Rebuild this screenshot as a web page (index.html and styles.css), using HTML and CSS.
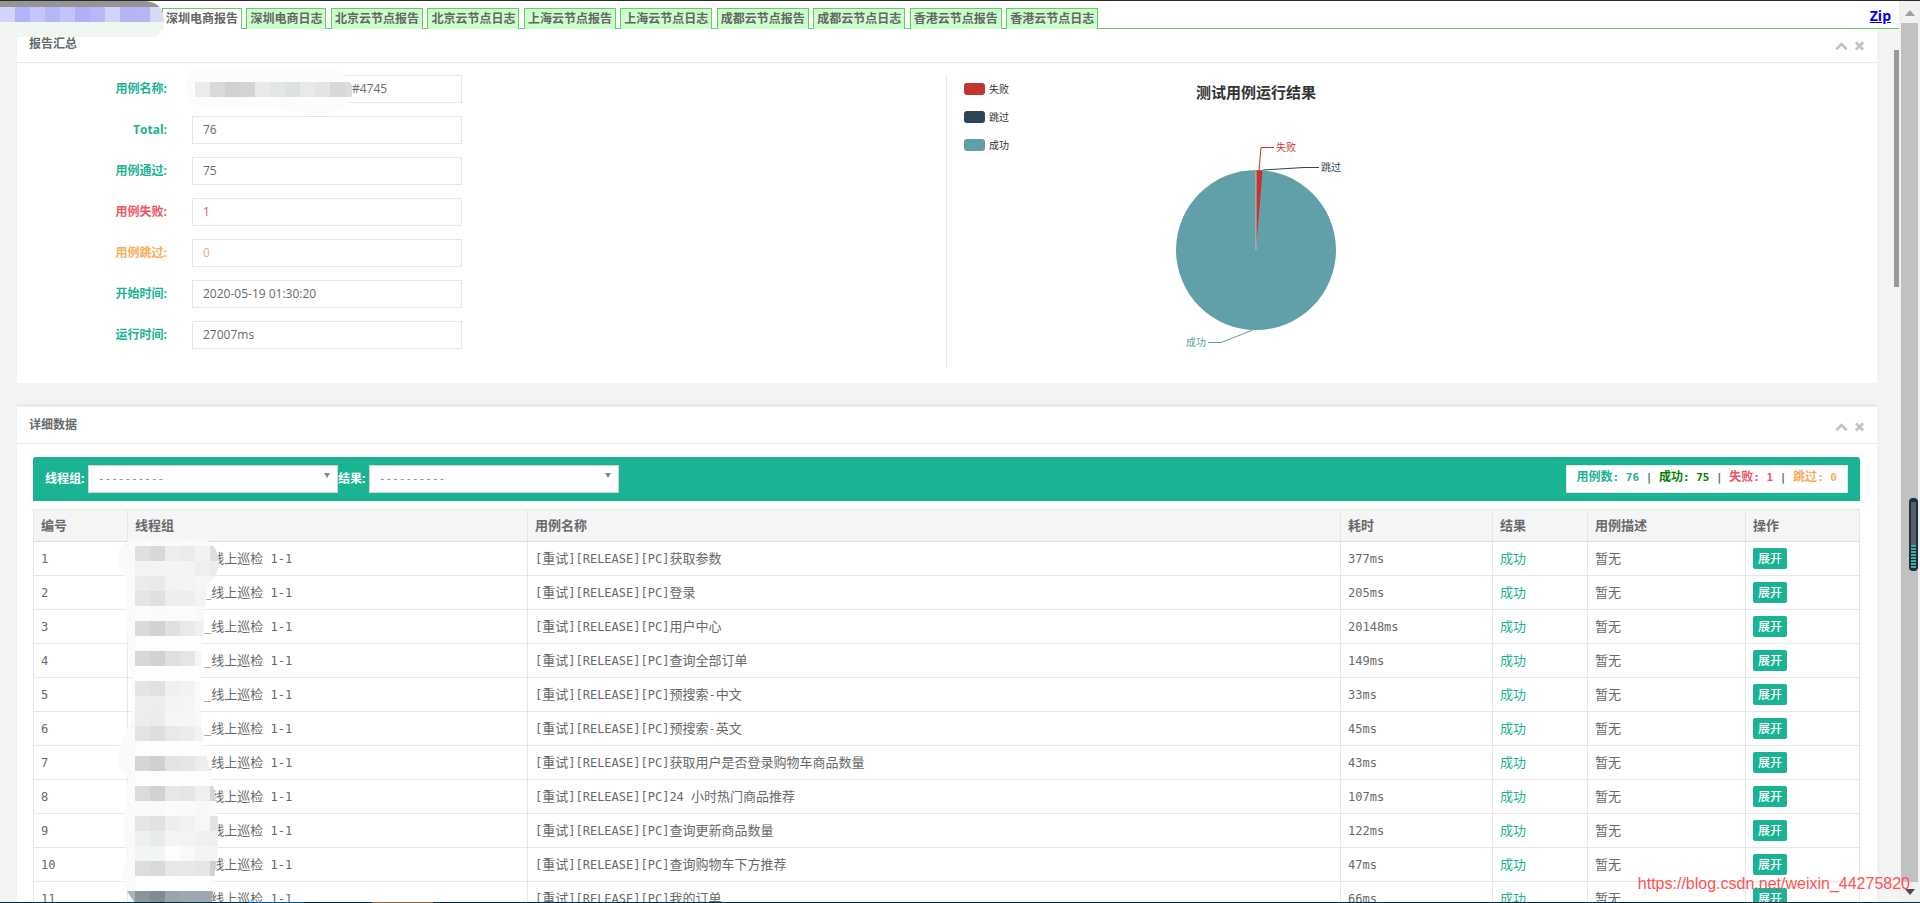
FILE: index.html
```html
<!DOCTYPE html>
<html lang="zh-CN">
<head>
<meta charset="utf-8">
<title>测试报告</title>
<link rel="stylesheet" href="styles.css">
</head>
<body>
<div class="window">
  <div class="frame">
    <header class="topbar">
      <nav class="tabs">
        <a class="tab active" href="#">深圳电商报告</a>
        <a class="tab" href="#">深圳电商日志</a>
        <a class="tab" href="#">北京云节点报告</a>
        <a class="tab" href="#">北京云节点日志</a>
        <a class="tab" href="#">上海云节点报告</a>
        <a class="tab" href="#">上海云节点日志</a>
        <a class="tab" href="#">成都云节点报告</a>
        <a class="tab" href="#">成都云节点日志</a>
        <a class="tab" href="#">香港云节点报告</a>
        <a class="tab" href="#">香港云节点日志</a>
      </nav>
      <a class="zip" href="#">Zip</a>
      <svg class="redact redact-top" width="166" height="42" aria-hidden="true">
        <defs><clipPath id="clip-top"><path d="M0 0H146Q164 2 164 20Q164 30 156 36H10Q0 34 0 28Z"/></clipPath></defs>
        <g clip-path="url(#clip-top)" data-mosaic="top"></g>
      </svg>
    </header>

    <main class="content">
      <section class="panel">
        <div class="panel-head first">
          <h5>报告汇总</h5>
          <div class="tools">
            <button type="button" aria-label="收起"><svg viewBox="0 0 1792 1792"><path d="M1683 1331l-166 165q-19 19-45 19t-45-19l-531-531-531 531q-19 19-45 19t-45-19l-166-165q-19-19-19-45.500t19-45.500l742-741q19-19 45-19t45 19l742 741q19 19 19 45.500t-19 45.500z"/></svg></button>
            <button type="button" aria-label="关闭"><svg viewBox="0 0 1792 1792"><path d="M1490 1322q0 40-28 68l-136 136q-28 28-68 28t-68-28l-294-294-294 294q-28 28-68 28t-68-28l-136-136q-28-28-28-68t28-68l294-294-294-294q-28-28-28-68t28-68l136-136q28-28 68-28t68 28l294 294 294-294q28-28 68-28t68 28l136 136q28 28 28 68t-28 68l-294 294 294 294q28 28 28 68z"/></svg></button>
          </div>
        </div>
        <div class="summary">
          <form class="fields">
            <label for="f-name">用例名称:</label>
            <div class="name-box">
              <input id="f-name" class="masked" value="#4745" readonly>
              <svg class="redact redact-name" width="170" height="48" aria-hidden="true">
                <defs><clipPath id="clip-name"><path d="M2 22Q0 2 14 1H110Q154 0 160 8L168 18V30L162 40Q150 46 140 46Q110 46 90 40H20Q4 40 2 22Z"/></clipPath></defs>
                <g clip-path="url(#clip-name)" data-mosaic="name"></g>
              </svg>
            </div>
            <label for="f-total">Total:</label><input id="f-total" value="76" readonly>
            <label for="f-pass">用例通过:</label><input id="f-pass" value="75" readonly>
            <label class="danger" for="f-fail">用例失败:</label><input id="f-fail" class="danger" value="1" readonly>
            <label class="warn" for="f-skip">用例跳过:</label><input id="f-skip" class="warn" value="0" readonly>
            <label for="f-start">开始时间:</label><input id="f-start" value="2020-05-19 01:30:20" readonly>
            <label for="f-run">运行时间:</label><input id="f-run" value="27007ms" readonly>
          </form>
          <div class="chart">
            <ul class="legend">
              <li><i class="c-fail"></i>失败</li>
              <li><i class="c-skip"></i>跳过</li>
              <li><i class="c-pass"></i>成功</li>
            </ul>
            <div class="pie">
              <h3>测试用例运行结果</h3>
              <svg width="240" height="240" viewBox="0 0 240 240" role="img" aria-label="测试用例运行结果">
                <circle cx="120" cy="136" r="80" fill="#61a0a8"/>
                <path d="M120 136L120 56A80 80 0 0 1 126.600 56.300Z" fill="#c23531"/>
                <path d="M120 136V56" stroke="#b9c6c6" stroke-width="1"/>
                <g fill="none">
                  <path d="M123 56L125 33.500H138" stroke="#c23531"/>
                  <path d="M127 56L168 53.500H183" stroke="#2f4554"/>
                  <path d="M117 216L85 228.500H72" stroke="#61a0a8"/>
                </g>
                <g class="pie-labels">
                  <text x="140" y="37" fill="#c23531">失败</text>
                  <text x="185" y="57" fill="#2f4554">跳过</text>
                  <text x="50" y="232" fill="#61a0a8">成功</text>
                </g>
              </svg>
            </div>
          </div>
        </div>
      </section>

      <section class="panel second">
        <div class="panel-head">
          <h5>详细数据</h5>
          <div class="tools">
            <button type="button" aria-label="收起"><svg viewBox="0 0 1792 1792"><path d="M1683 1331l-166 165q-19 19-45 19t-45-19l-531-531-531 531q-19 19-45 19t-45-19l-166-165q-19-19-19-45.500t19-45.500l742-741q19-19 45-19t45 19l742 741q19 19 19 45.500t-19 45.500z"/></svg></button>
            <button type="button" aria-label="关闭"><svg viewBox="0 0 1792 1792"><path d="M1490 1322q0 40-28 68l-136 136q-28 28-68 28t-68-28l-294-294-294 294q-28 28-68 28t-68-28l-136-136q-28-28-28-68t28-68l294-294-294-294q-28-28-28-68t28-68l136-136q28-28 68-28t68 28l294 294 294-294q28-28 68-28t68 28l136 136q28 28 28 68t-28 68l-294 294 294 294q28 28 28 68z"/></svg></button>
          </div>
        </div>
        <div class="details">
          <div class="toolbar">
            <label class="lab-group" for="s-group">线程组:</label>
            <span class="pick"><select id="s-group"><option>----------</option></select></span>
            <label class="lab-result" for="s-result">结果:</label>
            <span class="pick"><select id="s-result"><option>----------</option></select></span>
            <div class="stats"><b class="ok">用例数<code>: 76</code></b><code> | </code><b class="green">成功<code>: 75</code></b><code> | </code><b class="danger">失败<code>: 1</code></b><code> | </code><b class="warn">跳过<code>: 0</code></b></div>
          </div>
          <div class="table-box">
            <table>
              <colgroup><col class="w-no"><col class="w-group"><col><col class="w-time"><col class="w-result"><col class="w-desc"><col class="w-op"></colgroup>
              <thead>
                <tr><th>编号</th><th>线程组</th><th>用例名称</th><th>耗时</th><th>结果</th><th>用例描述</th><th>操作</th></tr>
              </thead>
              <tbody>
                <tr><td><code>1</code></td><td class="grp"><code>_</code>线上巡检<code> 1-1</code></td><td><code>[</code>重试<code>][RELEASE][PC]</code>获取参数</td><td><code>377ms</code></td><td class="ok">成功</td><td>暂无</td><td><button type="button" class="open">展开</button></td></tr>
                <tr><td><code>2</code></td><td class="grp"><code>_</code>线上巡检<code> 1-1</code></td><td><code>[</code>重试<code>][RELEASE][PC]</code>登录</td><td><code>205ms</code></td><td class="ok">成功</td><td>暂无</td><td><button type="button" class="open">展开</button></td></tr>
                <tr><td><code>3</code></td><td class="grp"><code>_</code>线上巡检<code> 1-1</code></td><td><code>[</code>重试<code>][RELEASE][PC]</code>用户中心</td><td><code>20148ms</code></td><td class="ok">成功</td><td>暂无</td><td><button type="button" class="open">展开</button></td></tr>
                <tr><td><code>4</code></td><td class="grp"><code>_</code>线上巡检<code> 1-1</code></td><td><code>[</code>重试<code>][RELEASE][PC]</code>查询全部订单</td><td><code>149ms</code></td><td class="ok">成功</td><td>暂无</td><td><button type="button" class="open">展开</button></td></tr>
                <tr><td><code>5</code></td><td class="grp"><code>_</code>线上巡检<code> 1-1</code></td><td><code>[</code>重试<code>][RELEASE][PC]</code>预搜索<code>-</code>中文</td><td><code>33ms</code></td><td class="ok">成功</td><td>暂无</td><td><button type="button" class="open">展开</button></td></tr>
                <tr><td><code>6</code></td><td class="grp"><code>_</code>线上巡检<code> 1-1</code></td><td><code>[</code>重试<code>][RELEASE][PC]</code>预搜索<code>-</code>英文</td><td><code>45ms</code></td><td class="ok">成功</td><td>暂无</td><td><button type="button" class="open">展开</button></td></tr>
                <tr><td><code>7</code></td><td class="grp"><code>_</code>线上巡检<code> 1-1</code></td><td><code>[</code>重试<code>][RELEASE][PC]</code>获取用户是否登录购物车商品数量</td><td><code>43ms</code></td><td class="ok">成功</td><td>暂无</td><td><button type="button" class="open">展开</button></td></tr>
                <tr><td><code>8</code></td><td class="grp"><code>_</code>线上巡检<code> 1-1</code></td><td><code>[</code>重试<code>][RELEASE][PC]24 </code>小时热门商品推荐</td><td><code>107ms</code></td><td class="ok">成功</td><td>暂无</td><td><button type="button" class="open">展开</button></td></tr>
                <tr><td><code>9</code></td><td class="grp"><code>_</code>线上巡检<code> 1-1</code></td><td><code>[</code>重试<code>][RELEASE][PC]</code>查询更新商品数量</td><td><code>122ms</code></td><td class="ok">成功</td><td>暂无</td><td><button type="button" class="open">展开</button></td></tr>
                <tr><td><code>10</code></td><td class="grp"><code>_</code>线上巡检<code> 1-1</code></td><td><code>[</code>重试<code>][RELEASE][PC]</code>查询购物车下方推荐</td><td><code>47ms</code></td><td class="ok">成功</td><td>暂无</td><td><button type="button" class="open">展开</button></td></tr>
                <tr><td><code>11</code></td><td class="grp"><code>_</code>线上巡检<code> 1-1</code></td><td><code>[</code>重试<code>][RELEASE][PC]</code>我的订单</td><td><code>66ms</code></td><td class="ok">成功</td><td>暂无</td><td><button type="button" class="open">展开</button></td></tr>
              </tbody>
            </table>
            <svg class="redact redact-table" width="104" height="363" aria-hidden="true">
              <defs><clipPath id="clip-table"><path d="M10 2Q50 -1 90 2Q100 8 101 24Q100 38 90 45L87 70L84 105L82 150L83 185L88 215L96 250L100 280V310L96 340L94 363H16L9 352Q2 340 6 325L10 314Q4 300 6 285L7 262L10 240L0 226V216Q8 190 14 180V140L10 110L8 70L9 40Q0 32 0 20Q1 6 10 2Z"/></clipPath></defs>
              <g clip-path="url(#clip-table)" data-mosaic="table"></g>
            </svg>
          </div>
        </div>
      </section>
      <div class="inner-scroll"><div class="inner-thumb"></div></div>
    </main>
  </div>

  <div class="outer-scroll">
    <svg width="10" height="6" viewBox="0 0 10 6"><path d="M0 6L5 0L10 6Z" fill="#a0a0a0"/></svg>
    <div class="outer-thumb"></div>
    <svg width="10" height="6" viewBox="0 0 10 6"><path d="M0 0L5 6L10 0Z" fill="#4a4a4a"/></svg>
  </div>
  <div class="meter"><div class="meter-track"></div></div>
  <div class="watermark">https://blog.csdn.net/weixin_44275820</div>
  <div class="desk-edge"></div>
</div>
<script src="mosaic.js"></script>
</body>
</html>
```
FILE: styles.css
```css
* { box-sizing: border-box; }
html, body { height: 100%; }
body {
  margin: 0;
  overflow: hidden;
  background: #f3f3f4;
  color: #676a6c;
  font: 12px/18px "Open Sans", "Noto Sans CJK SC", sans-serif;
}
code { font: 12px/18px "DejaVu Sans Mono", monospace; white-space: pre; }
input, select, button { font: inherit; color: inherit; }
h3, h5, ul { margin: 0; padding: 0; }
.danger { color: #ed5565; }
.warn { color: #f8ac59; }
.ok { color: #1ab394; }
.green { color: #008000; }

.window {
  position: relative;
  display: grid;
  grid-template-columns: 1fr 21px;
  height: 100vh;
  overflow: hidden;
  border-top: 1px solid #2b2b2b;
}
.frame { display: flex; flex-direction: column; min-width: 0; min-height: 0; }
.topbar {
  position: relative;
  z-index: 2;
  display: flex;
  justify-content: space-between;
  flex: none;
  height: 28px;
  padding: 7px 8px 0 162px;
  background: #fff;
  border-bottom: 1px solid #66cc66;
}
.tabs { font: 16px/20px "Liberation Sans", Arial, sans-serif; white-space: nowrap; height: 21px; }
.tab {
  display: inline-block;
  vertical-align: top;
  height: 21px;
  padding: 0 3px;
  border: 1px solid #66cc66;
  border-bottom: 0;
  background: #ccffcc;
  color: #666;
  font: bold 12px/20px "Open Sans", "Noto Sans CJK SC", sans-serif;
  text-decoration: none;
}
.tab.active { background: #fff; }
.zip { color: #0000ee; font-weight: bold; font-size: 14px; line-height: 16px; }

.redact { position: absolute; pointer-events: none; }
.redact-top { left: 0; top: 0; }

.content { position: relative; flex: 1; min-height: 0; overflow: hidden; padding: 0 22px 0 17px; }
.panel { background: #fff; }
.panel.second { margin-top: 21px; border-top: 3px solid #e7eaec; }
.panel-head {
  display: flex;
  align-items: center;
  justify-content: space-between;
  padding: 9px 11px 9px 12px;
  border-bottom: 1px solid #e7eaec;
}
.panel-head.first { padding-top: 6px; }
.panel-head h5 { font-size: 12px; line-height: 18px; font-weight: 600; }
.tools { display: flex; gap: 5px; padding-top: 3px; }
.tools button { display: block; width: 13px; height: 13px; padding: 0; border: 0; background: none; }
.tools svg { display: block; width: 13px; height: 13px; fill: #c4c4c4; }

.summary { display: grid; grid-template-columns: 1fr 1fr; padding: 12px 0 15px; }
.fields {
  display: grid;
  grid-template-columns: 150px 270px;
  gap: 13px 25px;
  align-content: start;
  align-items: center;
}
.fields label { color: #1ab394; font-weight: bold; text-align: right; }
.fields label.danger { color: #ed5565; }
.fields label.warn { color: #f8ac59; }
.fields input {
  display: block;
  width: 100%;
  height: 28px;
  padding: 0 10px 1px;
  border: 1px solid #e5e6e7;
  background: #fff;
  outline: 0;
}
.fields input.masked { padding-left: 159px; }
.name-box { position: relative; }
.redact-name { left: -8px; top: -8px; }

.chart { display: flex; min-height: 293px; margin-left: -1px; border-left: 1px solid #e7eaec; }
.legend {
  width: 189px;
  padding: 5px 0 0 17px;
  list-style: none;
  color: #333;
  font-size: 10px;
}
.legend li { display: flex; align-items: center; gap: 4px; height: 18px; margin-bottom: 10px; }
.legend i { width: 21px; height: 12px; border-radius: 3px; }
.c-fail { background: #c23531; }
.c-skip { background: #2f4554; }
.c-pass { background: #61a0a8; }
.pie { width: 240px; }
.pie h3 { padding-top: 6px; color: #333; font-size: 15px; line-height: 22px; text-align: center; }
.pie svg { display: block; margin-top: 11px; }
.pie-labels { font-size: 10px; }

.details { padding: 13px 17px 0 16px; }
.toolbar {
  display: flex;
  align-items: center;
  height: 44px;
  padding: 0 12px;
  border-radius: 3px 3px 0 0;
  background: #1ab394;
}
.toolbar label { color: #fff; font-weight: bold; }
.lab-group { width: 43px; }
.lab-result { width: 31px; }
.pick { position: relative; width: 250px; }
.pick::after {
  content: "";
  position: absolute;
  right: 8px;
  top: 8px;
  border: 3px solid transparent;
  border-top: 5px solid #888;
  border-bottom: 0;
}
.pick select {
  display: block;
  width: 100%;
  height: 28px;
  padding: 0 6px 2px;
  border: 1px solid #d5d5d5;
  border-radius: 0;
  background: #fff;
  color: #888;
  appearance: none;
  font: 11px "DejaVu Sans Mono", monospace;
  padding-left: 9px;
}
.stats {
  height: 28px;
  margin-left: auto;
  padding: 2px 10px;
  border: 1px solid #e5e6e7;
  background: #fff;
  white-space: nowrap;
}
.stats code { font-size: 11px; font-weight: bold; }

.table-box { position: relative; margin-top: 8px; }
table { width: 100%; table-layout: fixed; border-collapse: collapse; font-size: 13px; }
.w-no { width: 94px; }
.w-group { width: 400px; }
.w-time { width: 152px; }
.w-result { width: 95px; }
.w-desc { width: 158px; }
.w-op { width: 114px; }
th, td { border: 1px solid #e7e7e7; padding: 0 7px; text-align: left; }
th { height: 32px; padding-bottom: 2px; background: #f5f5f6; border-bottom-color: #ddd; font-weight: bold; }
td { height: 34px; }
td.grp { padding-left: 76px; }
td.ok, td.ok + td { padding-bottom: 2px; }
.open {
  display: block;
  height: 21px;
  padding: 0 5px;
  border: 0;
  border-radius: 2px;
  background: #1ab394;
  color: #fff;
  font-size: 12px;
  line-height: 20px;
  font-weight: 500;
}
.redact-table { left: 85px; top: 30px; }

.inner-scroll { position: absolute; top: 0; right: 0; bottom: 0; width: 5px; padding-top: 21px; background: #f5f5f5; }
.inner-thumb { height: 237px; background: #999; }

.outer-scroll {
  display: flex;
  flex-direction: column;
  align-items: center;
  gap: 7px;
  padding: 9px 2px 8px;
  background: #f1f1f1;
}
.outer-thumb { flex: 1; width: 17px; background: #c1c1c1; }

.meter {
  position: absolute;
  right: 2px;
  top: 497px;
  width: 9px;
  height: 73px;
  padding: 4px 2px 3px;
  border-radius: 4px;
  background: #1b3044;
}
.meter-track {
  height: 100%;
  background:
    repeating-linear-gradient(#3fae92 0 2px, #1b3044 2px 3px) bottom / 100% 23px no-repeat,
    #5c6066;
}
.watermark {
  position: absolute;
  right: 10px;
  bottom: 9px;
  color: #ff5252;
  font: 16px/20px "Liberation Sans", Arial, sans-serif;
}
.desk-edge {
  position: absolute;
  left: 0;
  right: 0;
  bottom: 0;
  height: 1px;
  background: linear-gradient(90deg, #0a2a3c 248px, #00589c 248px 304px, #0a2a3c 304px 372px, #8a6248 372px 433px, #0a2a3c 433px);
}
```
FILE: mosaic.js
```javascript
// Pixelated patches that hide private names.
// Each rect is [x, y, width, height, colour].
function strip(x, y, size, height, colours) {
  return colours.split(" ").map((c, i) => [x + i * size, y, size, height, "#" + c]);
}

const patches = {
  top: [
    [0, 0, 166, 6, "#959595"],
    ...strip(0, 6, 15, 15, "d4d4fb b2b2ff c5c5fd b5b5fa c3c3fc b0b0f8 b8b8f8 d2d2fa b4b4f7 b6b6f7 d6dbf0"),
    [0, 21, 166, 21, "#f0f7f1"]
  ],
  name: [
    [0, 0, 170, 48, "#fcfcfc"],
    ...strip(11, 15, 15, 15, "ebebeb d9d9da d0d2d1 d2d3d3 e9eaea e4e6e5 dde1df e8eaea e4e4e4 d9d7d8 dbdddc")
  ],
  table: [[0, 0, 104, 363, "#fafafa"]]
};

[
  "e0e0e0 d7d9d8 eceeee e9eceb f2f2f2 dcdfde",
  "f3f3f3 f2f5f3 f4f4f4 f4f4f4 efefef ebeceb",
  "ebebeb e9e9e9 f3f3f3 f4f4f4 f6f6f6 f6f6f6",
  "e3e6e5 dee1e0 eeeeee eeeeee f2f4f3 f2f4f3",
  "fcfcfc fafafa fafcfb fbfcfb fafafa fafafa",
  "dadada d2d2d2 e0e0e0 e8e9e8 eff1f0 eff1f0",
  "fdfdfd fdfdfd fdfdfd fdfdfd fdfdfd fdfdfd",
  "d6d8d7 d0d1d1 dfdfdf e5e5e5 f5f5f5 f5f5f5",
  "fdfdfd fdfdfd fdfdfd fdfdfd fdfdfd fdfdfd",
  "e3e5e4 dfe2e1 f0f0f0 f2f2f2 fafafa fafafa",
  "eeeeee ededed f4f4f4 f5f5f5 fafafa fafafa",
  "ecedec ebebeb f6f6f6 f6f6f6 f8f8f8 f8f8f8",
  "e2e4e3 dddfde e9e9e9 ececec f3f3f3 f3f3f3",
  "fdfdfd fdfdfd fdfdfd fdfdfd fdfdfd fdfdfd",
  "d5d7d6 ced1d0 e3e3e3 e6e6e6 eceeed eceeed",
  "fdfdfd fdfdfd fdfdfd fdfdfd fdfdfd fdfdfd",
  "dadbdb d0d2d3 e7e7e7 e5e5e6 efefef d6d6d6",
  "fafafa f9f9f9 fbfbfb fafafa f8f8f8 fafafa",
  "e5e5e5 e2e2e2 eeeeee f1f1f1 f7f7f7 e3e3e3",
  "eef0ef e9ebea f3f5f4 f3f3f3 f0f0f0 eeefef",
  "f3f5f4 f1f5f3 fdfdfd f8f9f9 f3f5f4 f3f5f4",
  "dcdedd d8dad9 e7e7e7 e8e8e8 e5e7e6 cfd1d0",
  "fdfdfd fdfdfd fdfdfd fdfdfd fdfdfd fdfdfd",
  "8a949b 808b93 9aa4ab 9fa8b0 9fa8b0 9fa8b0"
].forEach((row, i) => patches.table.push(...strip(17, 7 + i * 15, 15, 15, row)));
patches.table.push([0, 352, 17, 15, "#a9b4bc"]);

document.querySelectorAll("[data-mosaic]").forEach(group => {
  patches[group.dataset.mosaic].forEach(([x, y, w, h, fill]) => {
    const rect = document.createElementNS("http://www.w3.org/2000/svg", "rect");
    Object.entries({ x, y, width: w, height: h, fill, "shape-rendering": "crispEdges" })
      .forEach(([k, v]) => rect.setAttribute(k, v));
    group.appendChild(rect);
  });
});
```
